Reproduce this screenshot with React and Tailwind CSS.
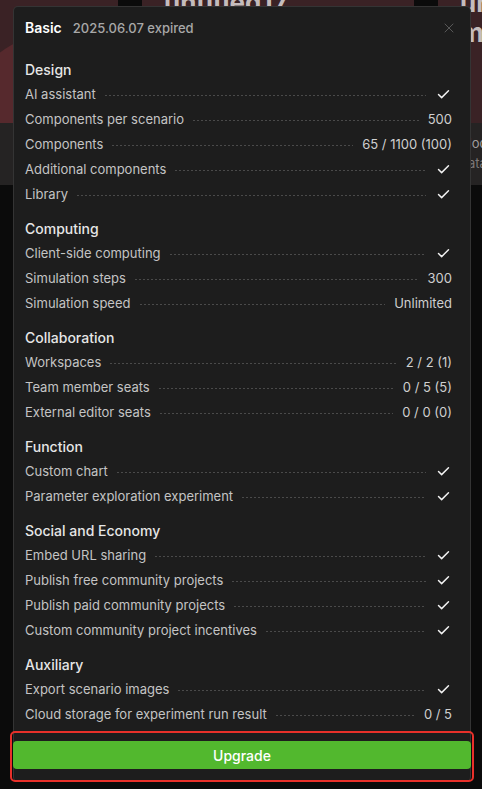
import React from "react";
import { Check, X } from "lucide-react";

const sections = [
  {
    title: "Design",
    rows: [
      ["AI assistant", true],
      ["Components per scenario", "500"],
      ["Components", "65 / 1100 (100)"],
      ["Additional components", true],
      ["Library", true],
    ],
  },
  {
    title: "Computing",
    rows: [
      ["Client-side computing", true],
      ["Simulation steps", "300"],
      ["Simulation speed", "Unlimited"],
    ],
  },
  {
    title: "Collaboration",
    rows: [
      ["Workspaces", "2 / 2 (1)"],
      ["Team member seats", "0 / 5 (5)"],
      ["External editor seats", "0 / 0 (0)"],
    ],
  },
  {
    title: "Function",
    rows: [
      ["Custom chart", true],
      ["Parameter exploration experiment", true],
    ],
  },
  {
    title: "Social and Economy",
    rows: [
      ["Embed URL sharing", true],
      ["Publish free community projects", true],
      ["Publish paid community projects", true],
      ["Custom community project incentives", true],
    ],
  },
  {
    title: "Auxiliary",
    rows: [
      ["Export scenario images", true],
      ["Cloud storage for experiment run result", "0 / 5"],
    ],
  },
];

const cards = [
  { title: ["untitled16"], info: ["Model", "Updated by Gaby"], circle: true },
  { title: ["untitled17"], info: ["Model", "Updated today"] },
  { title: ["untitled", "model"], info: ["Model with", "data"] },
];

// dimmed project cards behind the modal
const BackgroundCard = ({ card }) => (
  <div className="w-[272px] shrink-0">
    <div className="relative h-[123px] overflow-hidden bg-[#3a2225] px-[22px]">
      {card.circle && (
        <div className="absolute left-[126px] top-[36px] h-[150px] w-[150px] rounded-full bg-[#56292d]" />
      )}
      <div className="relative -mt-[12px] text-[26px] font-bold leading-[30px] text-[#c4bcbc]">
        {card.title.map((t) => (
          <div key={t}>{t}</div>
        ))}
      </div>
    </div>
    <div className="h-[62px] bg-[#252323] px-[22px] pt-[10px] text-[13px] leading-[20px] text-[#7c7878]">
      <div className="text-[#a09c9c]">{card.info[0]}</div>
      <div>{card.info[1]}</div>
    </div>
  </div>
);

const Row = ({ label, value }) => (
  <div className="flex h-[25px] items-center text-[13px]">
    <span className="text-[#c4c4c4]">{label}</span>
    <div className="mx-[9px] mt-[2px] h-px flex-1 bg-[linear-gradient(to_right,#4a4a4a_50%,transparent_50%)] bg-[length:4px_1px]" />
    {value === true ? (
      <Check className="ml-[1px] mr-[1px] h-[15px] w-[15px] text-[#f2f2f2]" strokeWidth={2.3} />
    ) : (
      <span className="text-[#cfcfcf]">{value}</span>
    )}
  </div>
);

export default function App() {
  return (
    <div
      className="relative h-[789px] w-[482px] overflow-hidden bg-[#0b0b0b]"
      style={{ fontFamily: "Inter, 'Noto Sans', sans-serif" }}
    >
      <div className="-ml-[154px] flex gap-[24px]">
        {cards.map((c, i) => (
          <BackgroundCard key={i} card={c} />
        ))}
      </div>

      {/* modal */}
      <div className="absolute left-[13px] top-[6px] flex w-[458px] flex-col rounded-[5px] border border-white/10 bg-[#1d1d1d] pb-[12px]">
        <div className="flex h-[41px] items-center justify-between pl-[11px] pr-[13px]">
          <div className="flex items-baseline gap-[11px]">
            <span className="text-[14px] font-semibold text-white">Basic</span>
            <span className="text-[13px] font-medium text-[#a8a8a8]">2025.06.07 expired</span>
          </div>
          <X className="h-[16px] w-[16px] text-[#5c5c5c]" strokeWidth={1.4} />
        </div>

        <div className="mt-[9px] flex flex-col gap-[9px] pl-[11px] pr-[18px]">
          {sections.map((s) => (
            <div key={s.title}>
              <div className="flex h-[25px] items-center text-[14px] font-medium text-[#e6e6e6]">
                {s.title}
              </div>
              {s.rows.map(([label, value]) => (
                <Row key={label} label={label} value={value} />
              ))}
            </div>
          ))}
        </div>

        <button className="-mx-px mt-[14px] flex h-[28px] items-center justify-center rounded-[4px] bg-[#52b82e] text-[14px] font-medium text-white">
          Upgrade
        </button>
      </div>

      {/* highlight annotation */}
      <div className="pointer-events-none absolute left-[10px] top-[731px] h-[51px] w-[464px] rounded-[5px] border-2 border-[#e8302a]" />
    </div>
  );
}
